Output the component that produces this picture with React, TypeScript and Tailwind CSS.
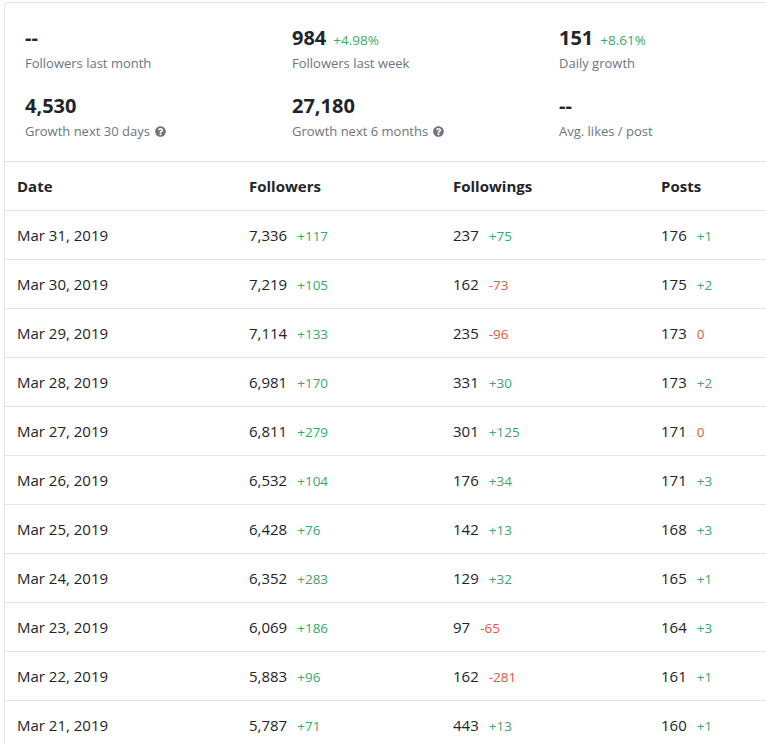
import React from "react";
import { FaQuestionCircle } from "react-icons/fa";

type Stat = { value: string; delta?: string; label: string; help?: boolean };

const stats: Stat[] = [
  { value: "--", label: "Followers last month" },
  { value: "984", delta: "+4.98%", label: "Followers last week" },
  { value: "151", delta: "+8.61%", label: "Daily growth" },
  { value: "4,530", label: "Growth next 30 days", help: true },
  { value: "27,180", label: "Growth next 6 months", help: true },
  { value: "--", label: "Avg. likes / post" },
];

type Row = [string, string, string, string, string, string, string];

const rows: Row[] = [
  ["Mar 31, 2019", "7,336", "+117", "237", "+75", "176", "+1"],
  ["Mar 30, 2019", "7,219", "+105", "162", "-73", "175", "+2"],
  ["Mar 29, 2019", "7,114", "+133", "235", "-96", "173", "0"],
  ["Mar 28, 2019", "6,981", "+170", "331", "+30", "173", "+2"],
  ["Mar 27, 2019", "6,811", "+279", "301", "+125", "171", "0"],
  ["Mar 26, 2019", "6,532", "+104", "176", "+34", "171", "+3"],
  ["Mar 25, 2019", "6,428", "+76", "142", "+13", "168", "+3"],
  ["Mar 24, 2019", "6,352", "+283", "129", "+32", "165", "+1"],
  ["Mar 23, 2019", "6,069", "+186", "97", "-65", "164", "+3"],
  ["Mar 22, 2019", "5,883", "+96", "162", "-281", "161", "+1"],
  ["Mar 21, 2019", "5,787", "+71", "443", "+13", "160", "+1"],
];

function Delta({ v }: { v: string }) {
  const pos = v.startsWith("+");
  return (
    <span className={"ml-[10px] text-[13.5px] " + (pos ? "text-[#3aa76d]" : "text-[#f0523f]")}>{v}</span>
  );
}

export default function App() {
  return (
    <div
      className="w-[766px] h-[743px] overflow-hidden bg-white text-[#212529]"
      style={{ fontFamily: '"Open Sans", "Noto Sans", sans-serif' }}
    >
      <div className="ml-[4px] mt-[2px] w-[900px] border border-[#e4e4e4] rounded-[4px] bg-white">
        <div className="grid grid-cols-[267px_267px_267px] gap-y-[18px] p-5 border-b border-[#e4e4e4]">
          {stats.map((s, i) => (
            <div key={i} className="flex flex-col">
              <div className="flex items-baseline h-[30px] leading-[30px] overflow-hidden">
                <span className="text-[20px] font-bold text-[#212529]">{s.value}</span>
                {s.delta && <span className="ml-[7px] text-[13.5px] text-[#3aa76d]">{s.delta}</span>}
              </div>
              <div className="flex items-center h-5 leading-5 text-[13px] text-[#6c757d]">
                <span>{s.label}</span>
                {s.help && <FaQuestionCircle className="ml-[5px] w-[11px] h-[11px] text-[#6c757d]" />}
              </div>
            </div>
          ))}
        </div>
        <div className="text-[15px]">
          <div className="grid grid-cols-[232px_204px_208px_200px] h-[49px] items-center border-b border-[#e4e4e4] font-bold">
            <div className="pl-3">Date</div>
            <div className="pl-3">Followers</div>
            <div className="pl-3">Followings</div>
            <div className="pl-3">Posts</div>
          </div>
          {rows.map((r, i) => (
            <div
              key={i}
              className="grid grid-cols-[232px_204px_208px_200px] h-[49px] items-center border-b border-[#e4e4e4]"
            >
              <div className="pl-3">{r[0]}</div>
              <div className="pl-3 flex items-baseline">
                <span>{r[1]}</span>
                <Delta v={r[2]} />
              </div>
              <div className="pl-3 flex items-baseline">
                <span>{r[3]}</span>
                <Delta v={r[4]} />
              </div>
              <div className="pl-3 flex items-baseline">
                <span>{r[5]}</span>
                <Delta v={r[6]} />
              </div>
            </div>
          ))}
        </div>
      </div>
    </div>
  );
}
